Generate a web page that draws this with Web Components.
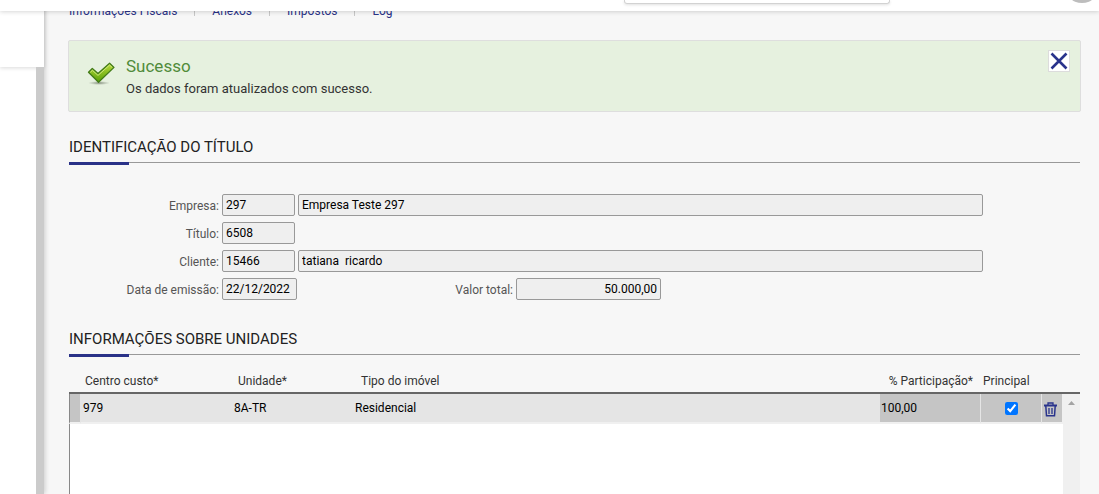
<!DOCTYPE html>
<html lang="pt-BR">
<head>
<meta charset="utf-8">
<title>Título</title>
<style>
  html, body { margin: 0; height: 100%; }
  body { font-family: Roboto, "Liberation Sans", sans-serif; font-size: 12px; line-height: 16px; color: #333; background: #f7f7f7; overflow: hidden; }
</style>
</head>
<body>
<erp-shell>
  <top-bar slot="top"></top-bar>
  <side-rail slot="side"></side-rail>
  <tab-links></tab-links>
  <success-alert heading="Sucesso">Os dados foram atualizados com sucesso.</success-alert>
  <title-section heading="IDENTIFICAÇÃO DO TÍTULO">
    <title-form></title-form>
  </title-section>
  <title-section class="grow" heading="INFORMAÇÕES SOBRE UNIDADES">
    <units-grid></units-grid>
  </title-section>
</erp-shell>

<script>
  const define = (name, html, setup) => {
    const template = document.createElement('template');
    template.innerHTML = html;
    customElements.define(name, class extends HTMLElement {
      constructor() {
        super();
        this.attachShadow({ mode: 'open' }).append(template.content.cloneNode(true));
      }
      connectedCallback() {
        if (setup) setup(this, this.shadowRoot);
      }
    });
  };
  const setHeading = (host, root) => {
    root.querySelector('h2').textContent = host.getAttribute('heading');
  };

  define('erp-shell', `
    <style>
      :host { display: flex; height: 100vh; position: relative; overflow: hidden; }
      main { flex: 1; min-width: 0; display: flex; flex-direction: column; padding: 0 18px 0 24px; }
      ::slotted(.grow) { flex: 1; }
    </style>
    <slot name="top"></slot>
    <slot name="side"></slot>
    <main><slot></slot></main>
  `);

  define('top-bar', `
    <style>
      :host { display: block; position: absolute; top: 0; left: 0; right: 0; height: 11px; z-index: 2; background: #fff; box-shadow: 0 1px 4px rgba(0,0,0,.16); }
      .clip { height: 11px; overflow: hidden; display: flex; justify-content: flex-end; align-items: flex-start; }
      .search { box-sizing: border-box; width: 266px; height: 4px; border: 1px solid #d2d2d2; border-top: 0; border-radius: 0 0 3px 3px; box-shadow: 0 1px 3px rgba(0,0,0,.12); margin-right: 192px; }
      .end { margin-right: 17px; width: 0; display: flex; justify-content: center; }
      .avatar { flex: none; width: 36px; height: 36px; border-radius: 50%; background: #bdbdbd; margin-top: -33px; }
    </style>
    <div class="clip"><div class="search"></div><div class="end"><div class="avatar"></div></div></div>
  `);

  define('side-rail', `
    <style>
      :host { display: flex; flex-direction: column; width: 44px; flex: none; background: #fff; box-shadow: 1px 0 5px rgba(0,0,0,.18); }
      .brand { height: 67px; flex: none; background: #fff; box-shadow: 0 1px 4px rgba(0,0,0,.15); }
      .track { flex: 1; margin-left: 36px; background: #cbcbcb; }
    </style>
    <div class="brand"></div>
    <div class="track"></div>
  `);

  define('tab-links', `
    <style>
      :host { display: block; height: 40px; flex: none; }
      nav { display: flex; align-items: center; padding: 6px 1px 0; }
      a { color: #2a3288; text-decoration: none; padding: 0 17px; line-height: 10px; }
      a:first-child { padding-left: 0; }
      a + a { border-left: 1px solid #c8c8c8; }
    </style>
    <nav><a href="#fiscais">Informações Fiscais</a><a href="#anexos">Anexos</a><a href="#impostos">Impostos</a><a href="#log">Log</a></nav>
  `);

  define('success-alert', `
    <style>
      :host { box-sizing: border-box; display: flex; flex: none; height: 72px; align-items: flex-start; background: #e6f1df; border: 1px solid #dedede; border-radius: 2px; padding: 9px 10px 0 17px; }
      .check { margin: 10px 9px 0 0; flex: none; }
      .text { flex: 1; padding-top: 6px; font-size: 13px; }
      h2 { margin: 0 0 4px; font-size: 17px; line-height: 21px; font-weight: 400; color: #508b3a; }
      p { margin: 0; line-height: 16px; }
      button { box-sizing: border-box; width: 22px; height: 22px; padding: 0; border: 1px solid #dcdcdc; background: #fff; display: grid; place-items: center; }
    </style>
    <svg class="check" width="31" height="26" viewBox="0 0 31 26" aria-hidden="true">
      <defs>
        <linearGradient id="leaf" x1="0" y1="0" x2="0" y2="1"><stop offset="0" stop-color="#b9dc3c"/><stop offset="1" stop-color="#58a006"/></linearGradient>
        <radialGradient id="shade"><stop offset="0" stop-color="#667060" stop-opacity=".8"/><stop offset="1" stop-color="#8a9483" stop-opacity="0"/></radialGradient>
      </defs>
      <ellipse cx="13" cy="23" rx="11" ry="2" fill="url(#shade)"/>
      <path d="M2.500 12.300 6.300 8.500 12 13.500 23.600 3.300 28 7.400 12.500 22.300Z" fill="url(#leaf)" stroke="#427b18" stroke-width="1.300" stroke-linejoin="round"/>
      <path d="M4.300 12.300 6.400 10.300 12 15.400 23.500 5.100 26.200 7.400" fill="none" stroke="#d5ec86" stroke-width=".9"/>
    </svg>
    <div class="text"><h2></h2><p><slot></slot></p></div>
    <button aria-label="Fechar"><svg width="18" height="18" viewBox="0 0 18 18"><path d="M1.500 1.500 16.500 16.500M16.500 1.500 1.500 16.500" stroke="#29338c" stroke-width="2.600"/></svg></button>
  `, setHeading);

  define('title-section', `
    <style>
      :host { display: flex; flex-direction: column; padding: 25px 1px 0; }
      h2 { margin: 0; height: 25px; font-size: 15px; line-height: 20px; font-weight: 400; color: #222; border-bottom: 1px solid #999; }
      .accent { width: 60px; height: 3px; margin-top: -1px; background: #2a3288; position: relative; flex: none; }
      ::slotted(*) { flex: 1; }
    </style>
    <h2></h2><div class="accent"></div>
    <slot></slot>
  `, setHeading);

  define('title-form', `
    <style>
      :host { display: block; padding: 29px 97px 4px 0; }
      form { display: grid; gap: 6px; }
      .row { display: flex; gap: 3px; }
      label { width: 150px; flex: none; text-align: right; line-height: 24px; height: 22px; color: #555; }
      label.far { width: 213px; }
      input { box-sizing: border-box; height: 22px; width: 73px; padding: 0 3px; border: 1px solid #999; border-radius: 2px; background: #efefef; font: inherit; color: #000; }
      .date { width: 75px; }
      .wide { flex: 1; width: auto; min-width: 0; }
      .amount { width: 145px; text-align: right; }
    </style>
    <form>
      <div class="row"><label for="company">Empresa:</label><input id="company" value="297" readonly><input class="wide" aria-label="Nome da empresa" value="Empresa Teste 297" readonly></div>
      <div class="row"><label for="bill">Título:</label><input id="bill" value="6508" readonly></div>
      <div class="row"><label for="client">Cliente:</label><input id="client" value="15466" readonly><input class="wide" aria-label="Nome do cliente" value="tatiana  ricardo" readonly></div>
      <div class="row"><label for="date">Data de emissão:</label><input class="date" id="date" value="22/12/2022" readonly><label class="far" for="total">Valor total:</label><input class="amount" id="total" value="50.000,00" readonly></div>
    </form>
  `);

  define('units-grid', `
    <style>
      :host { display: flex; padding-top: 9px; }
      .data { flex: 1; display: flex; flex-direction: column; }
      table { width: 100%; table-layout: fixed; border-collapse: separate; border-spacing: 0; }
      th, td { padding: 0 2px; text-align: left; font-weight: 400; box-sizing: border-box; }
      th { height: 28px; padding-top: 3px; border-bottom: 2px solid #666; color: #333; white-space: nowrap; }
      thead th:nth-child(2) { padding-left: 4px; }
      thead th:nth-child(3) { padding-left: 6px; }
      thead th:nth-child(4) { padding-left: 8px; }
      thead th.share { padding-right: 8px; text-align: right; }
      td { height: 30px; background: #e5e5e5; border-bottom: 2px solid #f0f0f0; color: #000; }
      td.on { background: #c5c5c5; border-right: 1px solid #e5e5e5; }
      td:first-child { border-left: 1px solid #888; }
      td.value { padding-left: 1px; }
      td.mark { text-align: center; padding: 0; }
      td.tool { padding-right: 4px; border-right-color: #f0f0f0; }
      input { width: 13px; height: 13px; margin: 0; display: block; margin-inline: auto; }
      button { display: block; margin: 2px auto 0; padding: 0; border: 0; background: none; height: 15px; }
      button svg { display: block; }
      .gutter { width: 12px; } .cost { width: 151px; } .unit { width: 121px; }
      .share { width: 101px; } .main { width: 61px; } .trash { width: 21px; }
      .rest { flex: 1; background: #fff; border-left: 1px solid #888; }
      .scroll { width: 17px; display: flex; flex-direction: column; }
      .scroll::before { content: ""; height: 26px; border-bottom: 2px solid #666; }
      .track { flex: 1; background: #f0f0f0; display: flex; justify-content: center; padding-top: 7px; }
    </style>
    <div class="data">
      <table>
        <thead><tr><th class="gutter"></th><th class="cost">Centro custo*</th><th class="unit">Unidade*</th><th>Tipo do imóvel</th><th class="share">% Participação*</th><th class="main" id="main">Principal</th><th class="trash"></th></tr></thead>
        <tbody><tr><td class="on"></td><td>979</td><td>8A-TR</td><td>Residencial</td><td class="on value">100,00</td><td class="on mark"><input type="checkbox" aria-labelledby="main" checked></td><td class="on mark tool"><button aria-label="Excluir"><svg width="13" height="15" viewBox="0 0 13 15" fill="none" stroke="#29338c"><path d="M0 3.500H13" stroke-width="2"/><path d="M4 3V1H9V3" stroke-width="1.300"/><path d="M1.800 4 2.500 13.800H10.500L11.200 4" stroke-width="1.500"/><path d="M5 6V12M8 6V12" stroke-width="1.300"/></svg></button></td></tr></tbody>
      </table>
      <div class="rest"></div>
    </div>
    <div class="scroll"><div class="track"><svg width="7" height="4" viewBox="0 0 7 4"><path d="M0 4 3.500 0 7 4Z" fill="#a3a3a3"/></svg></div></div>
  `);
</script>
</body>
</html>
